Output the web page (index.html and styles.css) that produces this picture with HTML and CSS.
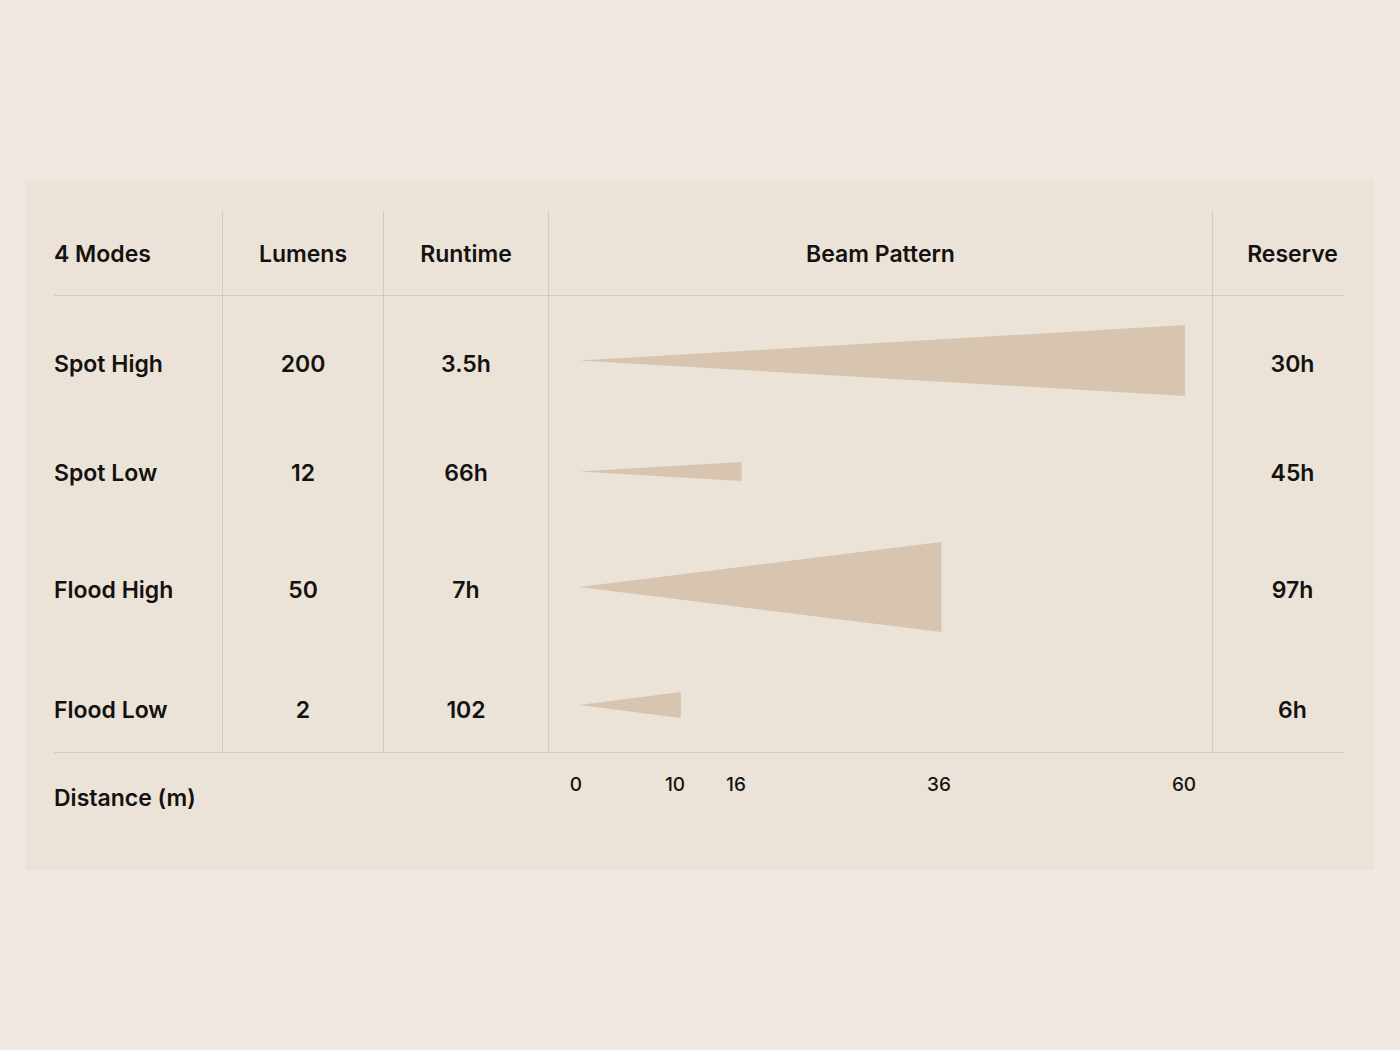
FILE: index.html
```html
<!DOCTYPE html>
<html lang="en">
<head>
<meta charset="utf-8">
<title>4 Modes</title>
<link rel="stylesheet" href="styles.css">
</head>
<body>
<section class="card">
  <div class="table">
    <div class="row row-head">
      <div class="cell c-mode">4 Modes</div>
      <div class="cell c-num">Lumens</div>
      <div class="cell c-num">Runtime</div>
      <div class="cell c-num">Beam Pattern</div>
      <div class="cell c-res">Reserve</div>
    </div>

    <div class="row row-1">
      <div class="cell c-mode">Spot High</div>
      <div class="cell c-num">200</div>
      <div class="cell c-num">3.5h</div>
      <div class="cell c-beam"><svg class="beam" width="664" height="71" viewBox="0 0 664 71"><polygon points="30,35.5 637,0 637,71"/></svg></div>
      <div class="cell c-res">30h</div>
    </div>

    <div class="row row-2">
      <div class="cell c-mode">Spot Low</div>
      <div class="cell c-num">12</div>
      <div class="cell c-num">66h</div>
      <div class="cell c-beam"><svg class="beam" width="664" height="19" viewBox="0 0 664 19"><polygon points="30,9.5 193,0 193,19"/></svg></div>
      <div class="cell c-res">45h</div>
    </div>

    <div class="row row-3">
      <div class="cell c-mode">Flood High</div>
      <div class="cell c-num">50</div>
      <div class="cell c-num">7h</div>
      <div class="cell c-beam"><svg class="beam" width="664" height="90" viewBox="0 0 664 90"><polygon points="30,45 393,0 393,90"/></svg></div>
      <div class="cell c-res">97h</div>
    </div>

    <div class="row row-4">
      <div class="cell c-mode">Flood Low</div>
      <div class="cell c-num">2</div>
      <div class="cell c-num">102</div>
      <div class="cell c-beam"><svg class="beam" width="664" height="26" viewBox="0 0 664 26"><polygon points="30,13 132,0 132,26"/></svg></div>
      <div class="cell c-res">6h</div>
    </div>

    <div class="row row-foot">
      <div class="foot c-dist">Distance (m)</div>
      <div class="foot"></div>
      <div class="foot"></div>
      <div class="foot c-axis">
        <span class="tick" style="left:27px">0</span>
        <span class="tick" style="left:126px">10</span>
        <span class="tick" style="left:187px">16</span>
        <span class="tick" style="left:390px">36</span>
        <span class="tick" style="left:635px">60</span>
      </div>
      <div class="foot"></div>
    </div>
  </div>
</section>
</body>
</html>
```

FILE: styles.css
```css
html, body {
  margin: 0;
  padding: 0;
}

body {
  background: #f1e9e1;
  font-family: "Inter", "Liberation Sans", sans-serif;
  color: #141210;
}

.card {
  margin: 179px 26px 0 25px;
  background: #ebe3d7;
  padding: 32px 30px 32px 29px;
  height: 691px;
  box-sizing: border-box;
}

.table {
  display: flex;
  flex-direction: column;
}

.row {
  display: grid;
  grid-template-columns: 168px 161px 165px 664px 132px;
}

.cell {
  display: flex;
  align-items: center;
  font-size: 23px;
  font-weight: 600;
  padding-top: 2px;
}

.row-head {
  height: 85px;
  box-sizing: border-box;
  border-bottom: 1px solid #dac9b1;
}

.c-mode {
  justify-content: flex-start;
}

.c-num,
.c-beam,
.c-res {
  border-left: 1px solid #dac9b1;
}

.c-num {
  justify-content: center;
}

.c-res {
  justify-content: center;
  padding-left: 28px;
}

.c-beam {
  padding: 31px 0;
}

.beam {
  display: block;
}

.beam polygon {
  fill: #d7c5af;
}

/* per-row fine tuning */
.row-1 .cell {
  padding-top: 0;
}

.row-1 .c-beam {
  padding: 29px 0 35px;
}

.row-2 .cell {
  padding-top: 4px;
}

.row-2 .c-beam {
  padding: 31px 0 30px;
}

.row-3 .cell {
  padding-top: 6px;
}

.row-3 .c-beam {
  padding: 31px 0 30px;
}

.row-4 {
  border-bottom: 1px solid #dac9b1;
}

.row-4 .cell {
  padding-top: 6px;
}

.row-4 .c-beam {
  padding: 30px 0 34px;
}

.foot {
  height: 86px;
  font-size: 23px;
  font-weight: 600;
}

.c-dist {
  display: flex;
  align-items: center;
  padding-top: 4px;
  box-sizing: border-box;
}

.c-axis {
  position: relative;
  margin-left: 1px;
}

.tick {
  position: absolute;
  top: 21px;
  transform: translateX(-50%);
  font-size: 19px;
  font-weight: 500;
  line-height: 22px;
}
```
